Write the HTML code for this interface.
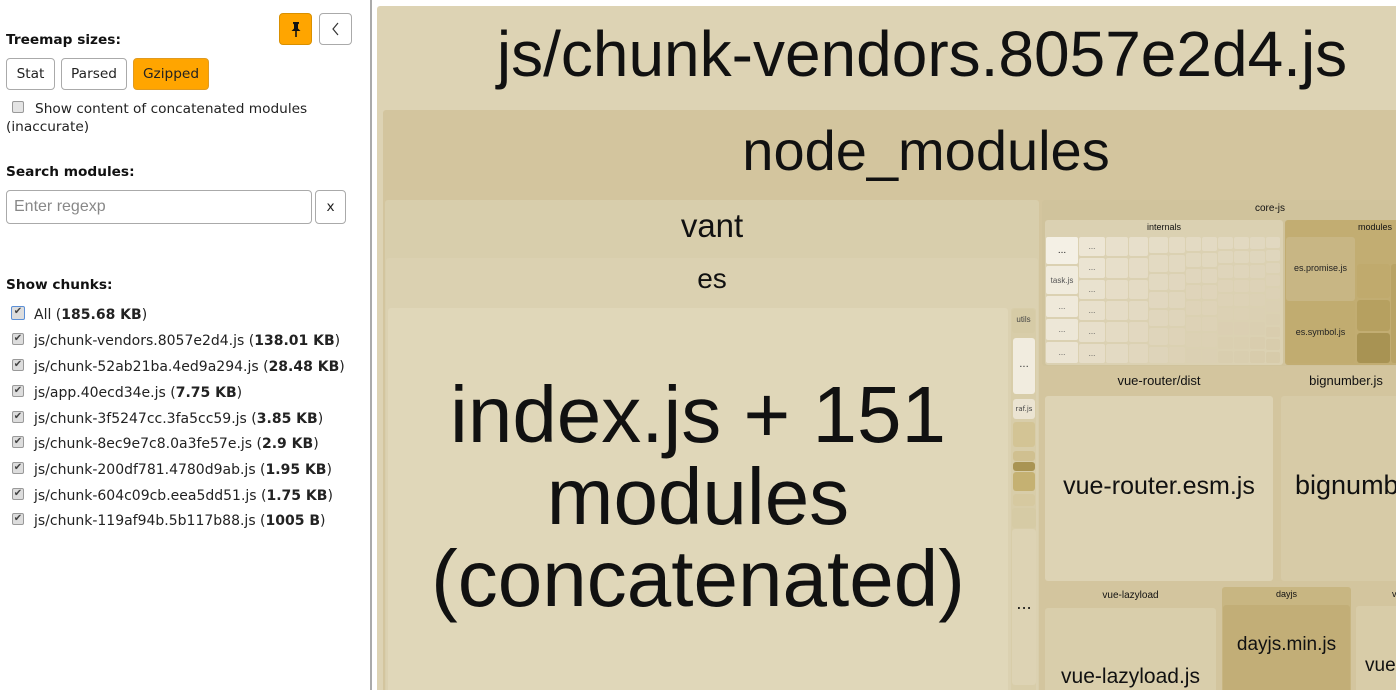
<!DOCTYPE html>
<html><head><meta charset="utf-8">
<style>
*{margin:0;padding:0;box-sizing:border-box}
html,body{width:1396px;height:690px;overflow:hidden}
#w{position:relative;width:1396px;height:690px;overflow:hidden;background:#fff;font-family:"DejaVu Sans",Verdana,sans-serif;font-size:13.7px;color:#222}
.sb{position:absolute;left:0;top:0;width:372px;height:690px;border-right:2px solid #aaa;background:#fff}
.h{position:absolute;left:6px;font-weight:bold;font-size:13.7px;color:#111}
.btn{position:absolute;height:32px;border:1px solid #aaa;border-radius:4px;background:#fff;font-size:13.7px;text-align:center;line-height:30px;color:#222}
.ck{position:absolute;left:12px;width:12px;height:12px;border:1px solid #999;border-radius:2px;background:#ddd;font-size:10px;line-height:10px;text-align:center;color:#444}
.ci{position:absolute;left:34px;font-size:14px;color:#222;white-space:nowrap}
.b{position:absolute;border-radius:3px;overflow:hidden}
.t{position:absolute;left:0;right:0;text-align:center;font-family:"Liberation Sans",Arial,sans-serif;color:#111;white-space:nowrap}
.g{position:absolute;display:flex;gap:1px}
.col{display:flex;flex-direction:column;gap:2px}
.col div{flex:1;border-radius:2px;font-family:"Liberation Sans",sans-serif;font-size:8px;color:#555;display:flex;align-items:center;justify-content:center}
</style></head><body><div id="w">
<div class="sb">
 <div class="btn" style="left:279px;top:13px;width:33px;height:32px;background:#ffa500;border-color:#d99000">
  <svg width="14" height="18" viewBox="0 0 14 18" style="margin-top:6px"><path d="M4 2h6v1.5l-1 1v4l2.5 2.5H2.5L5 8.5v-4l-1-1z" fill="#111"/><path d="M7 11v6" stroke="#111" stroke-width="1.6"/></svg>
 </div>
 <div class="btn" style="left:319px;top:13px;width:33px;height:32px"><svg width="12" height="16" viewBox="0 0 12 16" style="margin-top:7px"><path d="M8 2L3 8l5 6" stroke="#333" stroke-width="1.2" fill="none"/></svg></div>
 <div class="h" style="top:32px">Treemap sizes:</div>
 <div class="btn" style="left:6px;top:58px;width:49px">Stat</div>
 <div class="btn" style="left:61px;top:58px;width:66px">Parsed</div>
 <div class="btn" style="left:133px;top:58px;width:76px;background:#ffa500;border-color:#e09a20">Gzipped</div>
 <div class="ck" style="top:101px;left:12px;background:#e4e4e4"></div>
 <div style="position:absolute;left:35px;top:101px">Show content of concatenated modules</div>
 <div style="position:absolute;left:6px;top:119px">(inaccurate)</div>
 <div class="h" style="top:164px">Search modules:</div>
 <div style="position:absolute;left:6px;top:190px;width:306px;height:34px;border:1px solid #aaa;border-radius:4px;font-family:'Liberation Sans',sans-serif;font-size:16px;color:#888;line-height:32px;padding-left:7px">Enter regexp</div>
 <div class="btn" style="left:315px;top:190px;width:31px;height:34px;line-height:32px">x</div>
 <div class="h" style="top:277px">Show chunks:</div>
 <div class="ck" style="top:306px;left:11px;width:14px;height:14px;border-color:#5b8fd6">✔</div>
 <div class="ci" style="top:307px">All (<b>185.68 KB</b>)</div>
 <div class="ck" style="top:333px">✔</div><div class="ci" style="top:333px">js/chunk-vendors.8057e2d4.js (<b>138.01 KB</b>)</div>
 <div class="ck" style="top:359px">✔</div><div class="ci" style="top:359px">js/chunk-52ab21ba.4ed9a294.js (<b>28.48 KB</b>)</div>
 <div class="ck" style="top:385px">✔</div><div class="ci" style="top:385px">js/app.40ecd34e.js (<b>7.75 KB</b>)</div>
 <div class="ck" style="top:411px">✔</div><div class="ci" style="top:411px">js/chunk-3f5247cc.3fa5cc59.js (<b>3.85 KB</b>)</div>
 <div class="ck" style="top:436px">✔</div><div class="ci" style="top:436px">js/chunk-8ec9e7c8.0a3fe57e.js (<b>2.9 KB</b>)</div>
 <div class="ck" style="top:462px">✔</div><div class="ci" style="top:462px">js/chunk-200df781.4780d9ab.js (<b>1.95 KB</b>)</div>
 <div class="ck" style="top:488px">✔</div><div class="ci" style="top:488px">js/chunk-604c09cb.eea5dd51.js (<b>1.75 KB</b>)</div>
 <div class="ck" style="top:513px">✔</div><div class="ci" style="top:513px">js/chunk-119af94b.5b117b88.js (<b>1005 B</b>)</div>
</div>

<!-- treemap -->
<div class="b" style="left:377px;top:6px;width:1030px;height:700px;background:#ddd3b4"></div>
<div class="t" style="left:377px;width:1090px;top:14px;font-size:64px;line-height:80px">js/chunk-vendors.8057e2d4.js</div>
<div class="b" style="left:383px;top:110px;width:1020px;height:590px;background:#d3c59e"></div>
<div class="t" style="left:383px;width:1086px;top:116px;font-size:56px;line-height:70px">node_modules</div>

<div class="b" style="left:385px;top:200px;width:654px;height:500px;background:#d8ceac"></div>
<div class="t" style="left:385px;width:654px;top:206px;font-size:33px;line-height:40px">vant</div>
<div class="b" style="left:386px;top:258px;width:652px;height:440px;background:#dbd1b1"></div>
<div class="t" style="left:386px;width:652px;top:262px;font-size:28px;line-height:34px">es</div>
<div class="b" style="left:388px;top:308px;width:620px;height:390px;background:#e0d7b9"></div>
<div class="t" style="left:388px;width:620px;top:374px;font-size:80px;line-height:82px">index.js + 151<br>modules<br>(concatenated)</div>
<!-- side column -->
<div class="b" style="left:1011px;top:308px;width:25px;height:390px;background:#d8cda9"></div>
<div class="b" style="left:1012px;top:309px;width:23px;height:24px;background:#d6cba6;font-size:8px;text-align:center;line-height:22px;color:#444;font-family:'Liberation Sans'">utils</div>
<div class="b" style="left:1013px;top:338px;width:22px;height:56px;background:#f1ecdf;font-size:10px;text-align:center;line-height:54px;color:#333">...</div>
<div class="b" style="left:1013px;top:399px;width:22px;height:20px;background:#ebe4d2;font-size:7px;text-align:center;line-height:20px;color:#444">raf.js</div>
<div class="b" style="left:1013px;top:422px;width:22px;height:25px;background:#d3c495"></div>
<div class="b" style="left:1013px;top:451px;width:22px;height:10px;background:#d0c090"></div>
<div class="b" style="left:1013px;top:462px;width:22px;height:9px;background:#a99453"></div>
<div class="b" style="left:1013px;top:472px;width:22px;height:19px;background:#c5b172"></div>
<div class="b" style="left:1013px;top:494px;width:22px;height:12px;background:#d6c9a0"></div>
<div class="b" style="left:1012px;top:508px;width:24px;height:20px;background:#d6cba5"></div>
<div class="b" style="left:1012px;top:529px;width:24px;height:156px;background:#ddd3b4;text-align:center;font-size:16px;line-height:150px;color:#111">...</div>

<!-- core-js -->
<div class="b" style="left:1042px;top:200px;width:360px;height:166px;background:#d0c39c"></div>
<div class="t" style="left:1042px;width:456px;top:203px;font-size:10px">core-js</div>
<div class="b" style="left:1045px;top:220px;width:238px;height:145px;background:#dbd1b2"></div>
<div class="t" style="left:1045px;width:238px;top:222px;font-size:9px">internals</div>
<div class="g" style="left:1046px;top:237px;width:235px;height:126px">
 <div class="col" style="width:32px"><div style="background:#f4f0e5;flex:1.3;font-size:10px;color:#222">...</div><div style="background:#f0ebdd;flex:1.3">task.js</div><div style="background:#efe9da">...</div><div style="background:#ede7d7">...</div><div style="background:#ebe4d3">...</div></div>
 <div class="col" style="width:26px"><div style="background:#ede6d5">...</div><div style="background:#ebe4d2">...</div><div style="background:#e9e2cf">...</div><div style="background:#e8e0cc">...</div><div style="background:#e7dfcb">...</div><div style="background:#e6ddc8">...</div></div>
 <div class="col" style="width:22px"><div style="background:#e8e0cc"></div><div style="background:#e7dfca"></div><div style="background:#e6ddc7"></div><div style="background:#e5dcc6"></div><div style="background:#e4dbc4"></div><div style="background:#e3dac3"></div></div>
 <div class="col" style="width:19px"><div style="background:#e7dfcb"></div><div style="background:#e5dcc6"></div><div style="background:#e4dbc4"></div><div style="background:#e3dac3"></div><div style="background:#e2d8c0"></div><div style="background:#e1d7be"></div></div>
 <div class="col" style="width:19px"><div style="background:#e5ddc7"></div><div style="background:#e3dac2"></div><div style="background:#e2d9c1"></div><div style="background:#e1d7bf"></div><div style="background:#e0d6bd"></div><div style="background:#dfd5bb"></div><div style="background:#ded4ba"></div></div>
 <div class="col" style="width:16px"><div style="background:#e4dbc4"></div><div style="background:#e2d9c1"></div><div style="background:#e1d7bf"></div><div style="background:#e0d6bd"></div><div style="background:#dfd5bb"></div><div style="background:#ded3b8"></div><div style="background:#ddd2b6"></div></div>
 <div class="col" style="width:15px"><div style="background:#e3dac3"></div><div style="background:#e1d8bf"></div><div style="background:#e0d6bd"></div><div style="background:#dfd4ba"></div><div style="background:#ded3b8"></div><div style="background:#ddd2b6"></div><div style="background:#dcd1b4"></div><div style="background:#dbd0b3"></div></div>
 <div class="col" style="width:15px"><div style="background:#e3dac3"></div><div style="background:#e1d8bf"></div><div style="background:#e0d6bd"></div><div style="background:#dfd4ba"></div><div style="background:#ded3b8"></div><div style="background:#ddd2b6"></div><div style="background:#dcd1b4"></div><div style="background:#dbd0b3"></div></div>
 <div class="col" style="width:15px"><div style="background:#e2d9c1"></div><div style="background:#e0d7be"></div><div style="background:#dfd5bb"></div><div style="background:#ded3b8"></div><div style="background:#ddd2b6"></div><div style="background:#dcd1b4"></div><div style="background:#dbcfb2"></div><div style="background:#dacfb0"></div><div style="background:#d9ceaf"></div></div>
 <div class="col" style="width:15px"><div style="background:#e2d9c1"></div><div style="background:#e0d7be"></div><div style="background:#dfd5bb"></div><div style="background:#ded3b8"></div><div style="background:#ddd2b6"></div><div style="background:#dcd1b4"></div><div style="background:#dbcfb2"></div><div style="background:#dacfb0"></div><div style="background:#d9ceaf"></div></div>
 <div class="col" style="width:15px"><div style="background:#e1d8c0"></div><div style="background:#dfd6bd"></div><div style="background:#ded4ba"></div><div style="background:#ddd2b7"></div><div style="background:#dcd1b5"></div><div style="background:#dbd0b3"></div><div style="background:#dacfb1"></div><div style="background:#d9cdae"></div><div style="background:#d8ccac"></div></div>
 <div class="col" style="width:14px"><div style="background:#e1d8c0"></div><div style="background:#dfd6bd"></div><div style="background:#ded4ba"></div><div style="background:#ddd2b7"></div><div style="background:#dcd1b5"></div><div style="background:#dbd0b3"></div><div style="background:#dacfb1"></div><div style="background:#d9cdae"></div><div style="background:#d8ccac"></div><div style="background:#d7cbaa"></div></div>
</div>
<div class="b" style="left:1285px;top:220px;width:120px;height:145px;background:#c2ad72"></div>
<div class="t" style="left:1285px;width:180px;top:222px;font-size:9px">modules</div>
<div class="b" style="left:1286px;top:237px;width:69px;height:64px;background:#c8b684;font-family:'Liberation Sans';font-size:9px;text-align:center;line-height:62px;color:#222">es.promise.js</div>
<div class="b" style="left:1286px;top:301px;width:69px;height:62px;background:#c1ac70;font-family:'Liberation Sans';font-size:9px;text-align:center;line-height:62px;color:#222">es.symbol.js</div>
<div class="b" style="left:1357px;top:237px;width:40px;height:26px;background:#c2ad72"></div>
<div class="b" style="left:1357px;top:264px;width:33px;height:34px;background:#c0aa6d"></div>
<div class="b" style="left:1357px;top:300px;width:33px;height:31px;background:#b6a060"></div>
<div class="b" style="left:1357px;top:333px;width:33px;height:30px;background:#a89353"></div>
<div class="b" style="left:1391px;top:264px;width:8px;height:99px;background:#b9a365"></div>

<!-- vue-router -->
<div class="b" style="left:1043px;top:370px;width:232px;height:213px;background:#d3c59e"></div>
<div class="t" style="left:1043px;width:232px;top:373px;font-size:13px">vue-router/dist</div>
<div class="b" style="left:1045px;top:396px;width:228px;height:185px;background:#ddd3b4"></div>
<div class="t" style="left:1045px;width:228px;top:472px;font-size:25px">vue-router.esm.js</div>
<div class="b" style="left:1279px;top:370px;width:130px;height:213px;background:#d3c59e"></div>
<div class="t" style="left:1279px;width:134px;top:373px;font-size:13px">bignumber.js</div>
<div class="b" style="left:1281px;top:396px;width:130px;height:185px;background:#d7cba7"></div>
<div class="t" style="left:1281px;width:auto;right:auto;padding-left:14px;top:470px;font-size:27px">bignumber.js</div>

<!-- bottom row -->
<div class="b" style="left:1043px;top:587px;width:175px;height:120px;background:#d3c59e"></div>
<div class="t" style="left:1043px;width:175px;top:590px;font-size:10px">vue-lazyload</div>
<div class="b" style="left:1045px;top:608px;width:171px;height:100px;background:#d9ceab"></div>
<div class="t" style="left:1045px;width:171px;top:665px;font-size:21px">vue-lazyload.js</div>
<div class="b" style="left:1222px;top:587px;width:129px;height:120px;background:#c8b682"></div>
<div class="t" style="left:1222px;width:129px;top:589px;font-size:9px">dayjs</div>
<div class="b" style="left:1223px;top:605px;width:127px;height:100px;background:#c2ae77"></div>
<div class="t" style="left:1223px;width:127px;top:634px;font-size:19px">dayjs.min.js</div>
<div class="b" style="left:1354px;top:587px;width:60px;height:120px;background:#d3c59e"></div>
<div class="t" style="left:1354px;width:60px;top:589px;font-size:9px;text-align:left;padding-left:38px">vuex</div>
<div class="b" style="left:1356px;top:606px;width:60px;height:100px;background:#d8cca8"></div>
<div class="t" style="left:1365px;width:auto;right:auto;top:655px;font-size:19px">vuex.esm.js</div>
</div></body></html>
